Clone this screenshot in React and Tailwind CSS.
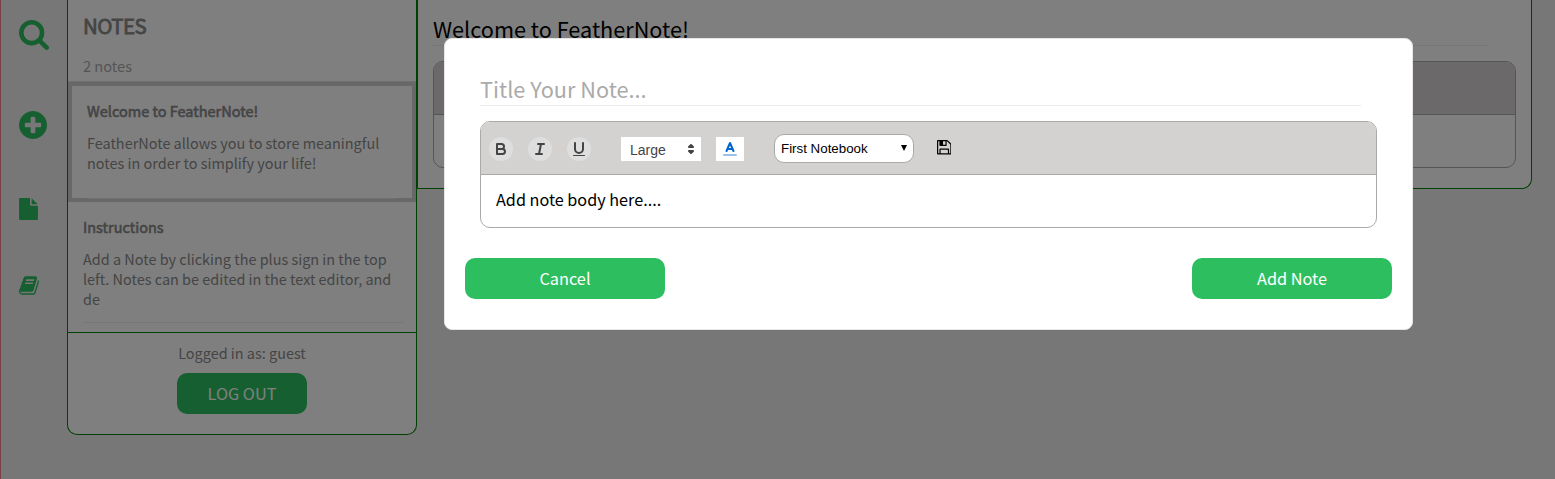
const PATHS = {
  search: 'M1216 832q0-185-131.5-316.5t-316.5-131.5-316.5 131.5-131.5 316.5 131.5 316.5 316.5 131.5 316.5-131.5 131.5-316.5zm512 832q0 52-38 90t-90 38q-54 0-90-38l-343-342q-179 124-399 124-143 0-273.5-55.5t-225-150-150-225-55.5-273.5 55.5-273.5 150-225 225-150 273.5-55.5 273.5 55.5 225 150 150 225 55.5 273.5q0 220-124 399l343 343q37 37 37 90z',
  plus: 'M1344 960v-128q0-26-19-45t-45-19h-256v-256q0-26-19-45t-45-19h-128q-26 0-45 19t-19 45v256h-256q-26 0-45 19t-19 45v128q0 26 19 45t45 19h256v256q0 26 19 45t45 19h128q26 0 45-19t19-45v-256h256q26 0 45-19t19-45zm320-64q0 209-103 385.5t-279.5 279.5-385.5 103-385.5-103-279.5-279.5-103-385.5 103-385.5 279.5-279.5 385.5-103 385.5 103 279.5 279.5 103 385.5z',
  file: 'M1152 512v-472q22 14 36 28l408 408q14 14 28 36h-472zm-128 32q0 40 28 68t68 28h544v1056q0 40-28 68t-68 28h-1344q-40 0-68-28t-28-68v-1600q0-40 28-68t68-28h800v544z',
  book: 'M1703 478q40 57 18 129l-275 906q-19 64-76.5 107.5t-122.5 43.5h-923q-77 0-148.5-53.5t-99.5-131.5q-24-67-2-127 0-4 3-27t4-37q1-8-3-21.5t-3-19.5q2-11 8-21t16.5-23.5 16.5-23.5q23-38 45-91.5t30-91.5q3-10 .5-30t-.5-28q3-11 17-28t17-23q21-36 42-92t25-90q1-9-2.5-32t.5-28q4-13 22-30.5t22-22.5q19-26 42.5-84.5t27.5-96.5q1-8-3-25.5t-2-26.5q2-8 9-18t18-23 17-21q8-12 16.5-30.5t15-35 16-36 19.5-32 26.5-23.5 36-11.5 47.5 5.5l-1 3q38-9 51-9h761q74 0 114 56t18 130l-274 906q-36 119-71.5 153.5t-128.5 34.5h-869q-27 0-38 15-11 16-1 43 24 70 144 70h923q29 0 56-15.5t35-41.5l300-987q7-22 5-57 38 15 59 43zm-1064 2q-4 13 2 22.5t20 9.5h608q13 0 25.5-9.5t16.5-22.5l21-64q4-13-2-22.5t-20-9.5h-608q-13 0-25.5 9.5t-16.5 22.5zm-83 256q-4 13 2 22.5t20 9.5h608q13 0 25.5-9.5t16.5-22.5l21-64q4-13-2-22.5t-20-9.5h-608q-13 0-25.5 9.5t-16.5 22.5z',
  save: 'M512 1536h768v-384h-768v384zm896 0h128v-896q0-14-10-38.5t-20-34.5l-281-281q-10-10-34-20t-39-10v416q0 40-28 68t-68 28h-576q-40 0-68-28t-28-68v-416h-128v1280h128v-416q0-40 28-68t68-28h832q40 0 68 28t28 68v416zm-384-928v-320q0-13-9.5-22.5t-22.5-9.5h-192q-13 0-22.5 9.5t-9.5 22.5v320q0 13 9.5 22.5t22.5 9.5h192q13 0 22.5-9.5t9.5-22.5zm640 32v928q0 40-28 68t-68 28h-1344q-40 0-68-28t-28-68v-1344q0-40 28-68t68-28h928q40 0 88 20t76 48l280 280q28 28 48 76t20 88z',
};

function Icon({ name, box, className }) {
  return (
    <svg viewBox={box} className={className} fill="currentColor" aria-hidden="true">
      <path d={PATHS[name]} />
    </svg>
  );
}

function Sidebar() {
  return (
    <nav className="flex h-[479px] w-[67px] shrink-0 flex-col items-start border-l border-[#f08095] pl-[18px] pt-[20px] text-[#2dbe60]">
      <Icon name="search" box="64 128 1664 1664" className="size-[30px]" />
      <Icon name="plus" box="128 128 1536 1536" className="mt-[61px] size-[28px]" />
      <Icon name="file" box="128 0 1536 1792" className="mt-[59px] h-[22px] w-[19px]" />
      <Icon name="book" box="63 128 1668 1537" className="mt-[56px] h-[19px] w-[20px]" />
    </nav>
  );
}

function NotesColumn() {
  return (
    <aside className="flex h-[435px] w-[350px] shrink-0 flex-col rounded-b-[10px] border-x border-b border-[#008000] bg-white text-[#8a8a8a]">
      <h1 className="mt-[9px] h-[32px] pl-[15px] text-[20.5px] leading-[32px] tracking-[-0.6px] [-webkit-text-stroke:0.8px_currentColor]">NOTES</h1>
      <p className="mt-[15px] h-[20px] pl-[15px] text-[14.6px] leading-[20px] text-[#aaaaaa]">2 notes</p>
      <div className="mt-[5px] border-t border-[#dedbdc]">
        <article className="h-[120px] border-4 border-[#d3d0d1] px-[15px] pt-[15px]">
          <div className="h-[98px] border-b border-[#e0dddd]">
            <h2 className="h-[20px] text-[14.5px] leading-[20px] [-webkit-text-stroke:0.6px_currentColor]">Welcome to FeatherNote!</h2>
            <p className="mt-[12px] whitespace-nowrap text-[14.45px] leading-[20px]">
              FeatherNote allows you to store meaningful<br />notes in order to simplify your life!
            </p>
          </div>
        </article>
      </div>
      <article className="ml-[15px] mr-[13px] mt-[15px] h-[106px] border-b border-[#ececec]">
        <h2 className="h-[20px] text-[14.5px] leading-[20px] [-webkit-text-stroke:0.6px_currentColor]">Instructions</h2>
        <p className="mt-[12px] whitespace-nowrap text-[14.45px] leading-[20px]">
          Add a Note by clicking the plus sign in the top<br />left. Notes can be edited in the text editor, and<br />de
        </p>
      </article>
      <footer className="mt-[9px] flex flex-1 flex-col items-center border-t border-[#008000] pt-[10px]">
        <p className="text-[14.45px] leading-[20px]">Logged in as: guest</p>
        <button className="mt-[10px] h-[41px] w-[130px] rounded-[10px] bg-[#2dbe60] text-[16.3px] leading-[41px] text-white">LOG OUT</button>
      </footer>
    </aside>
  );
}

function NoteView() {
  return (
    <main className="h-[189px] w-[1115px] rounded-br-[10px] border-x border-b border-[#008000] bg-white pl-[15px] pr-[15px] pt-[13px]">
      <h1 className="h-[33px] w-[1055px] border-b border-[#ececec] text-[21.7px] leading-[32px]">Welcome to FeatherNote!</h1>
      <section className="mt-[15px] h-[107px] overflow-hidden rounded-[10px] border border-[#aaaaaa]">
        <div className="h-[53px] border-b border-[#aaaaaa] bg-[#d6d2d3]" />
      </section>
    </main>
  );
}

function Toolbar() {
  return (
    <div className="flex h-[53px] items-center border-b border-[#aaaaaa] bg-[#d3d2d0] pl-[8px] pt-[2px] text-[#444444]">
      <button className="flex size-[24px] items-center justify-center rounded-full bg-[#dedede]">
        <svg viewBox="0 0 18 18" className="size-[18px]" fill="none" stroke="currentColor" strokeWidth="2" strokeLinejoin="round">
          <path d="M5,4H9.5A2.5,2.5,0,0,1,9.5,9H5Z" />
          <path d="M5,9h5.5A2.5,2.5,0,0,1,10.5,14H5Z" />
        </svg>
      </button>
      <button className="ml-[15px] flex size-[24px] items-center justify-center rounded-full bg-[#dedede]">
        <svg viewBox="0 0 18 18" className="size-[18px]" fill="none" stroke="currentColor" strokeWidth="2" strokeLinecap="round">
          <path d="M7,4H13M5,14H11M8,14L10,4" />
        </svg>
      </button>
      <button className="ml-[15px] flex size-[24px] items-center justify-center rounded-full bg-[#dedede]">
        <svg viewBox="0 0 18 18" className="size-[18px]" fill="none" stroke="currentColor" strokeWidth="2" strokeLinecap="round">
          <path d="M5,3V9a4.012,4.012,0,0,0,4,4H9a4.012,4.012,0,0,0,4-4V3" />
          <rect x="3" y="15" width="12" height="1" rx="0.5" fill="currentColor" stroke="none" />
        </svg>
      </button>
      <div className="ml-[30px] flex h-[24px] w-[80px] items-center justify-between bg-white pl-[9px] pr-[1px] font-['Liberation_Sans',sans-serif] text-[14px] leading-[24px]">
        <span className="pt-[2px]">Large</span>
        <svg viewBox="0 0 18 18" className="size-[18px]" fill="currentColor" stroke="currentColor" strokeWidth="2" strokeLinejoin="round">
          <path d="M7 11L9 13L11 11Z M7 7L9 5L11 7Z" />
        </svg>
      </div>
      <button className="ml-[15px] flex h-[24px] w-[28px] items-center justify-center bg-white text-[#0066cc]">
        <svg viewBox="0 0 18 18" className="size-[18px]" fill="none" stroke="currentColor" strokeWidth="2" strokeLinecap="round" strokeLinejoin="round">
          <path d="M3,15H15" opacity="0.4" />
          <path d="M5.5,11L9,3L12.5,11M11.63,9H6.38" />
        </svg>
      </button>
      <div className="mb-px ml-[30px] flex h-[29px] w-[140px] items-center justify-between rounded-[10px] border border-[#aaaaaa] bg-white pl-[6px] pr-[6px] font-['Liberation_Sans',sans-serif] text-[13.33px] text-black">
        <span className="pt-px">First Notebook</span>
        <svg viewBox="0 0 6 6" className="mb-[1px] size-[6px]" fill="currentColor"><path d="M0 0H6L3 6Z" /></svg>
      </div>
      <Icon name="save" box="128 128 1536 1536" className="mb-[3px] ml-[22.5px] size-[14.5px] text-black" />
    </div>
  );
}

function NoteModal() {
  return (
    <div className="fixed inset-0 flex items-start bg-black/50 pl-[444px] pt-[38px]">
      <section className="h-[292px] w-[969px] rounded-[8px] border border-[#e6e6e6] bg-white px-[20px] pt-[34px]">
        <div className="ml-[15px] h-[33px] w-[881px] border-b border-[#ececec] text-[21.7px] leading-[32px] text-[#aaaaaa]">Title Your Note...</div>
        <div className="ml-[15px] mt-[15px] h-[107px] w-[897px] overflow-hidden rounded-[10px] border border-[#aaaaaa]">
          <Toolbar />
          <p className="pl-[15px] pt-[12px] text-[16.2px] leading-[24px] text-black">Add note body here....</p>
        </div>
        <div className="mt-[30px] flex justify-between text-[16.3px] leading-[41px] text-white">
          <button className="h-[41px] w-[200px] rounded-[10px] bg-[#2dbe60]">Cancel</button>
          <button className="h-[41px] w-[200px] rounded-[10px] bg-[#2dbe60]">Add Note</button>
        </div>
      </section>
    </div>
  );
}

export default function App() {
  return (
    <div className="flex h-[479px] items-start overflow-hidden bg-[#efefef] font-['Noto_Sans_CJK_SC',sans-serif]">
      <Sidebar />
      <NotesColumn />
      <NoteView />
      <NoteModal />
    </div>
  );
}
